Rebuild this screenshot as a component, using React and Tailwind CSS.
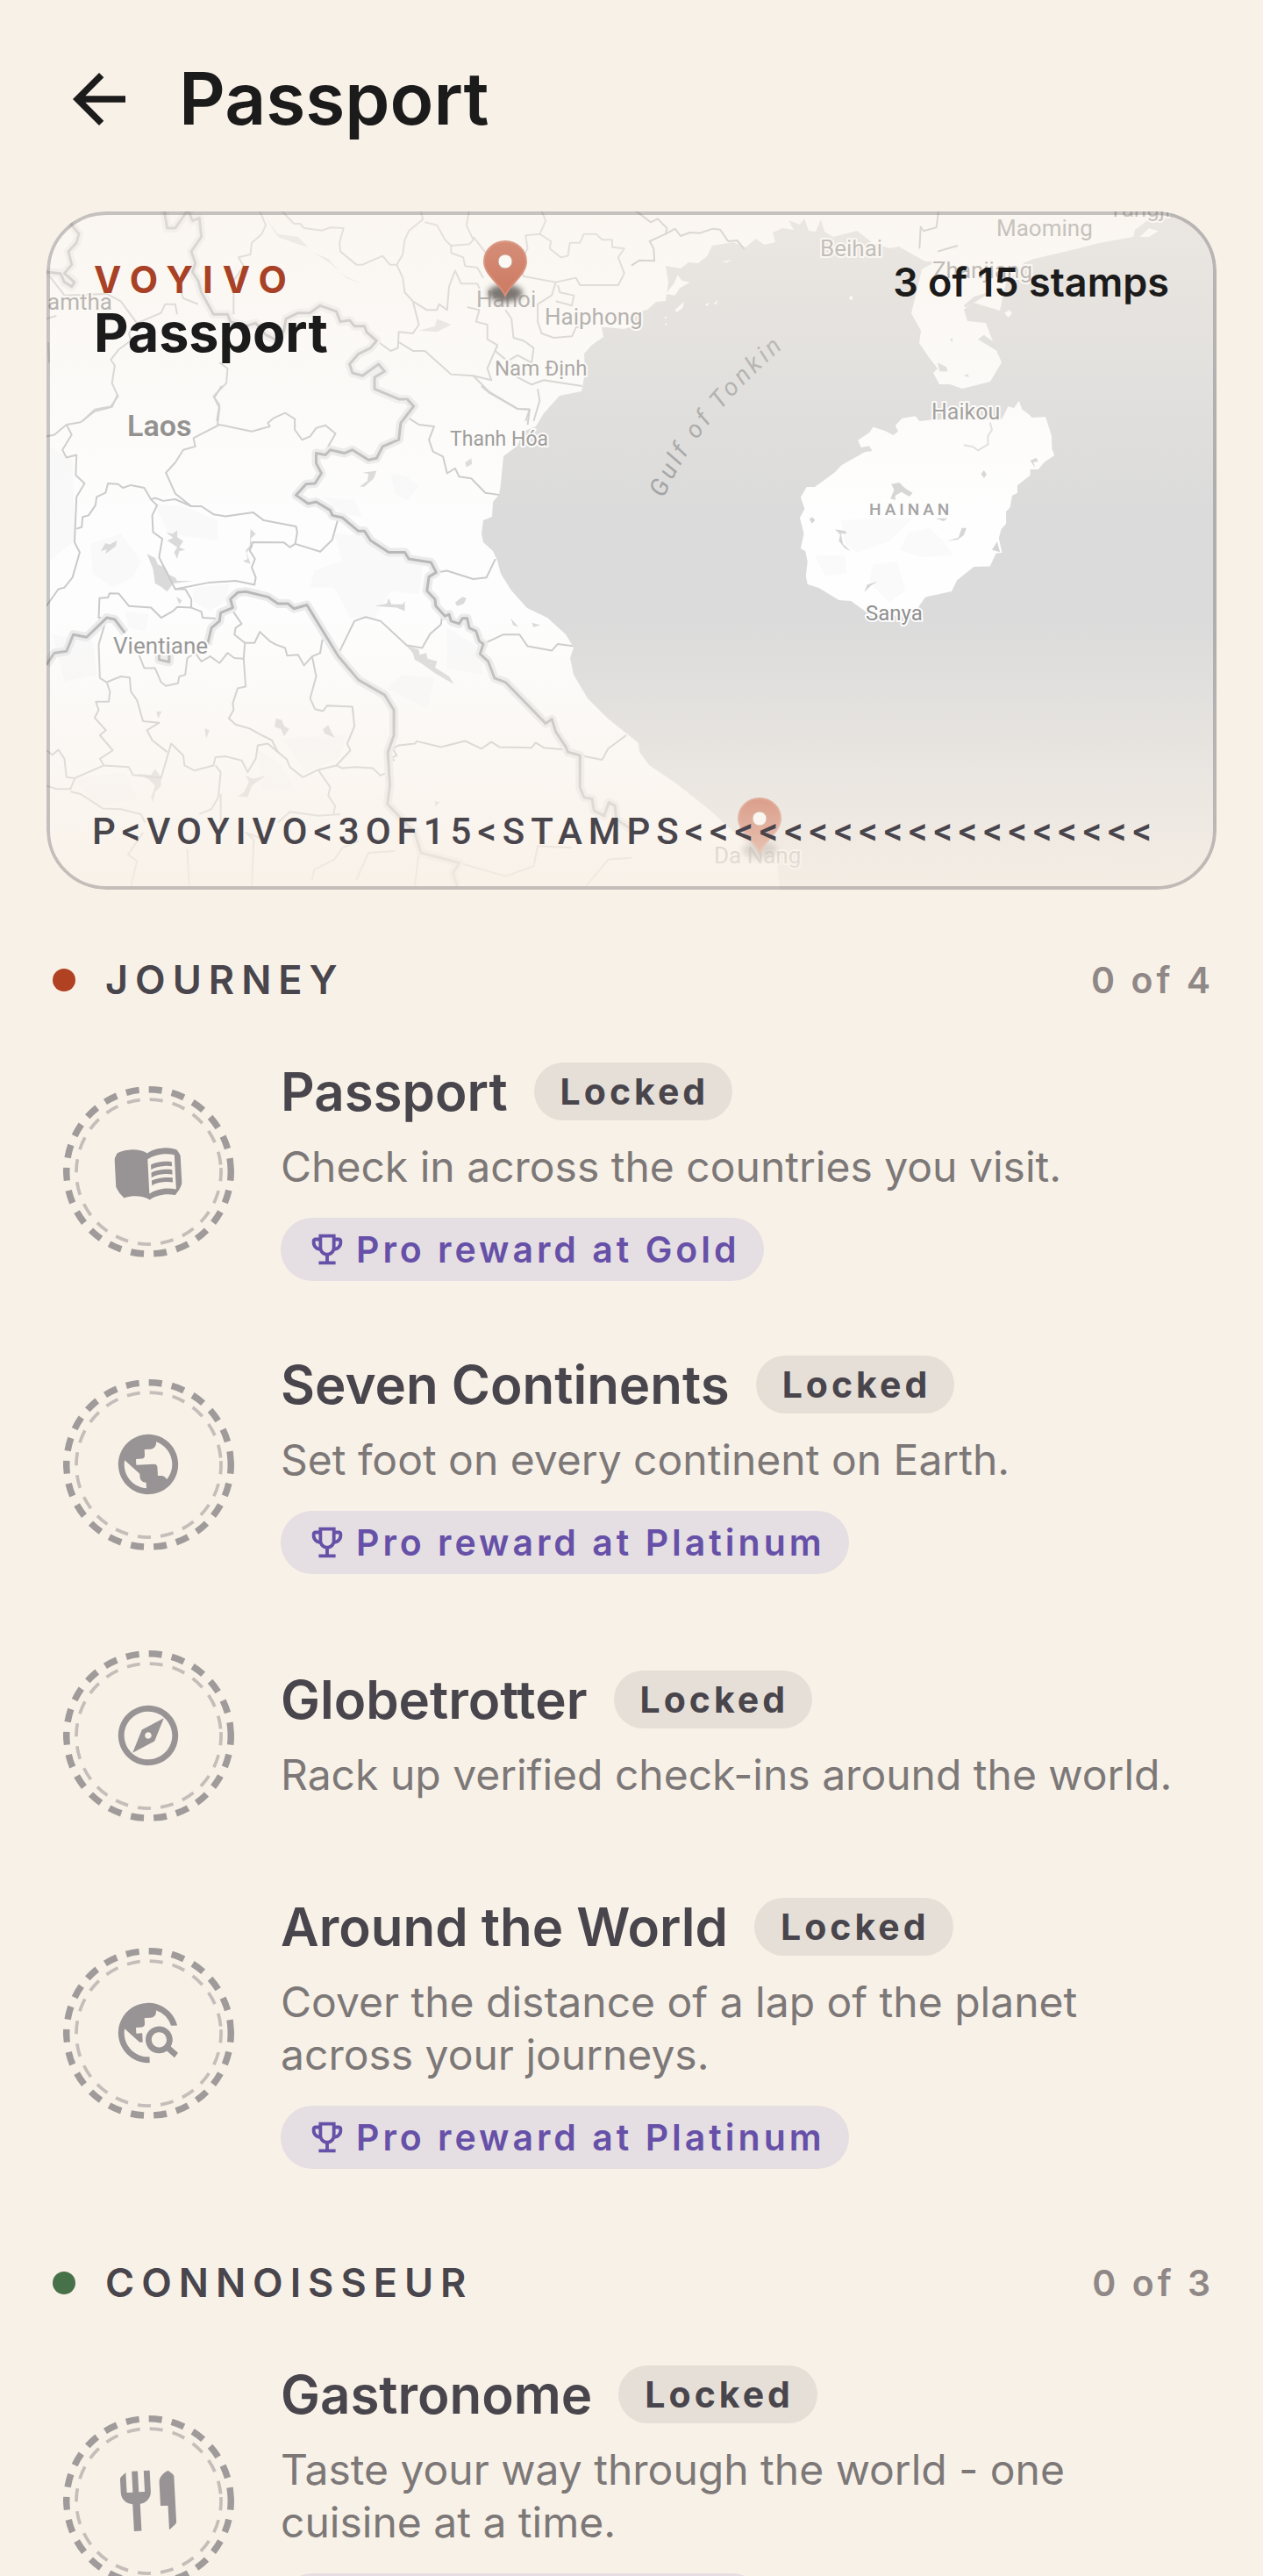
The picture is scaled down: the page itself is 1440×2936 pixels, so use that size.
import React from 'react';
import {
  MdArrowBack,
  MdMenuBook,
  MdPublic,
  MdOutlineExplore,
  MdTravelExplore,
  MdRestaurant,
  MdOutlineEmojiEvents
} from 'react-icons/md';

const sections = [
  {
    name: 'JOURNEY',
    progress: '0 of 4',
    dot: 'bg-[#b04122]',
    stamps: [
      { icon: MdMenuBook, title: 'Passport', text: 'Check in across the countries you visit.', reward: 'Pro reward at Gold' },
      { icon: MdPublic, title: 'Seven Continents', text: 'Set foot on every continent on Earth.', reward: 'Pro reward at Platinum' },
      { icon: MdOutlineExplore, title: 'Globetrotter', text: 'Rack up verified check-ins around the world.' },
      { icon: MdTravelExplore, title: 'Around the World', text: 'Cover the distance of a lap of the planet across your journeys.', reward: 'Pro reward at Platinum' }
    ]
  },
  {
    name: 'CONNOISSEUR',
    progress: '0 of 3',
    dot: 'bg-[#477148]',
    stamps: [
      { icon: MdRestaurant, title: 'Gastronome', text: 'Taste your way through the world - one cuisine at a time.', reward: 'Pro reward at Gold' }
    ]
  }
];

const SEA =
  'M1322 241 L1294 262 L1292 270 L1253 277 L1230 283 L1179 295 L1168 299 L1147 323 L1143 340 L1140 354 L1110 345 L1099 353 L1103 366 L1124 368 L1135 397 L1142 413 L1129 435 L1097 443 L1083 438 L1071 438 L1064 425 L1069 420 L1059 407 L1048 391 L1050 377 L1039 357 L1044 337 L1051 307 L1067 298 L1055 298 L1037 288 L1025 281 L1014 283 L995 277 L977 263 L950 270 L940 264 L936 250 L930 264 L922 263 L917 249 L912 256 L899 251 L905 262 L892 260 L881 265 L884 276 L871 279 L862 272 L850 282 L836 276 L812 280 L806 292 L796 300 L785 299 L776 306 L759 303 L762 322 L759 343 L748 344 L738 353 L725 356 L722 372 L711 375 L692 373 L686 373 L688 384 L675 393 L666 403 L667 425 L663 446 L638 451 L620 471 L611 486 L596 492 L590 508 L574 520 L571 551 L569 564 L562 572 L561 589 L551 593 L549 608 L551 618 L562 628 L567 639 L571 654 L583 673 L601 693 L624 704 L645 723 L654 738 L650 750 L654 769 L670 796 L693 819 L712 834 L728 847 L729 857 L740 872 L771 893 L809 923 L846 957 L856 963 L868 972 L886 980 L889 1014 L1387 1014 L1387 241 Z';

// Country borders, drawn heavier than the provincial ones
const NORTH_BORDERS = [
  'M170 722 L178 770 L196 800 L190 830 L170 860 L178 905 L160 935 L185 965 L178 980 L160 965 L150 935 L115 930',
  'M408 722 L415 780 L435 780 L465 722',
  'M468 722 L478 755 L495 745 L500 810 L475 860 L485 900 L478 930 L492 960 L500 1000 L530 1075 L565 1075 L572 1100 L610 1115 L635 1105 L660 1145 L690 1165 L705 1130 L710 1090 L740 1070 L770 1070 L795 1045 L835 1065 L845 1100 L868 1095 L880 1115 L905 1115 L910 1135 L935 1165 L920 1190 L890 1210 L868 1245 L875 1275 L900 1285 L940 1245 L955 1270 L930 1290 L930 1330 L990 1365 L1010 1365 L1027 1388 L1000 1440'
];
const SOUTH_BORDERS = [
  'M1010 38 L1027 60 L995 110 L990 160 L950 180 L935 215 L915 220 L875 190 L855 200 L820 190 L808 205 L785 200 L785 230 L798 260 L782 290 L760 292 L735 325 L765 350 L785 345 L820 370 L825 385 L850 392 L890 432 L905 432 L920 460 L965 495 L1005 495 L1015 515 L1070 525 L1083 555 L1065 568 L1060 610 L1080 635 L1082 655 L1105 685 L1115 680 L1120 700 L1140 708 L1148 692 L1160 692 L1165 720 L1182 730 L1190 760 L1200 768 L1192 798 L1212 820 L1228 870 L1255 882 L1355 1005 L1370 992 L1380 1030 L1405 1075 L1410 1090 L1440 1100 L1440 1195 L1450 1225 L1470 1230 L1475 1265 L1500 1280 L1512 1240 L1527 1250 L1530 1290 L1568 1320',
  'M115 830 L135 795 L165 790 L182 740 L215 748 L265 690 L285 695 L310 735 M395 800 L395 815 L420 822 L420 800 M515 770 L525 720 L545 700 L548 675 L578 660 L572 635 L590 615 L610 612 L665 628 L690 648 L715 648 L730 663 L762 652 L840 805 L890 875 L955 920 L978 965 L978 1040 L963 1090 L968 1190 L962 1245 L1030 1330 L1045 1390 L1140 1420 L1125 1450 L1135 1490'
];

const NORTH_PROVINCES = [
  'M645 722 L660 770 L650 800 L625 830 L622 870 L592 880 L605 910 L580 960 L580 1075',
  'M700 722 L730 765 L745 765 L755 780 L800 788 L820 778 L853 780 L843 830 L845 860 L885 905 L900 905 L950 875 L968 905 L985 905',
  'M1045 722 L1050 750 L1015 790 L1005 820 L1000 870 L985 905 L1000 950 L1005 1000 L1025 1030 L1060 1060 L1085 1060 L1090 1040 L1110 1060 L1115 980 L1130 925 L1145 970 L1185 970 L1195 1000',
  'M1055 760 L1085 770 L1105 820 L1120 840 L1165 835 L1175 820 L1158 770 L1165 722',
  'M1175 810 L1215 880 M1120 840 L1120 865 L1150 880 L1155 910 L1185 915 L1200 950',
  'M1345 722 L1355 755 L1340 800 L1305 805 L1310 850 L1290 900 L1300 945 L1380 965 L1430 950 L1440 975 L1535 975 L1550 935 L1535 880 L1550 850 L1520 845 L1520 820 L1495 820 L1480 800 L1450 800 L1440 830 L1415 830 L1410 875 L1392 880 L1365 850 L1368 825 L1340 800',
  'M1380 965 L1370 1010 L1335 1040 L1335 1100 L1345 1140 L1375 1155 L1420 1150 L1430 1120 L1465 1110',
  'M1380 1030 L1420 1045 L1425 1010 L1390 1000 L1385 975',
  'M1160 1050 L1190 1060 L1182 1100 L1210 1110 L1210 1160 L1235 1180 L1230 1200 L1260 1235 L1285 1215 L1320 1240 L1325 1190 L1300 1165 L1275 1155 L1270 1090 L1255 1060',
  'M1025 1030 L1040 1110 L1025 1140 L990 1135 L988 1190 L970 1200 L935 1165 M990 1170 L1025 1200 L1055 1200 L1120 1280 L1175 1285 L1215 1340 L1285 1398 L1315 1400 L1305 1440',
  'M1235 1180 L1210 1260 L1220 1300 L1175 1285 M1270 1240 L1278 1285 L1320 1315 L1350 1300 L1445 1320 M1335 1330 L1340 1370 L1325 1440',
  'M265 1005 L300 1030 L340 1105 L400 1070 L410 1040 L435 1040 L440 1075',
  'M340 1105 L320 1140 L325 1165 L295 1195 L275 1230 L285 1250 L278 1310 L293 1355 L275 1390 L235 1400 L205 1440',
  'M545 1240 L565 1260 L562 1310 L530 1355 L545 1385 L538 1440',
  'M115 930 L160 1010 L265 1005 M115 1090 L140 1080 M120 1170 L122 1240 M445 980 L455 1020 L492 1040'
];
const SOUTH_PROVINCES = [
  'M292 25 L278 62 L235 75 L200 108 L165 115 L135 145 L115 150 M165 115 L178 145 L155 190 L165 213 L190 205 L188 265 L210 290 L190 330 L185 465 L198 495 L180 570 L160 600 L145 605 L115 655',
  'M550 0 L532 35 L545 65 L540 115 M480 155 L545 115 L625 135 L670 120 L665 110 L680 95 L708 80 L732 98 L732 130 L750 160 L770 150 L785 125 L808 117 L833 142 L810 190',
  'M480 155 L485 180 L455 190 L435 228 L412 258 L435 320 L475 358 L500 358 L530 382 L560 388 L628 376 L655 400 L735 418 L738 435 L733 470 L795 493 L825 458 L840 392',
  'M190 425 L203 420 L205 390 L220 385 L237 355 L240 330 L262 318 L268 290 L293 292 L305 303 L325 295 L358 303 L375 338 L385 333 L405 342 L435 337 L475 358',
  'M375 338 L390 355 L378 385 L380 435 L403 455 L395 510 L435 605 L520 585 L585 580 L632 592 L635 570 L625 540 L633 515 L620 490 L628 465 L705 466 L720 480 L733 470',
  'M435 605 L460 605 L475 635 L475 660 L440 658 L430 670 L400 690 L375 660 L320 655 L295 618 L272 617 L268 630 L247 632 L245 690 L265 690 M475 660 L500 672 L503 690 L545 693',
  'M265 690 L245 770 L248 870 L265 882 L300 865 L322 868 L325 910 L340 935 L355 998 L395 1003 L365 1025 L378 1055 L415 1090',
  'M345 800 L358 840 L385 840 L400 882 L412 893 L442 885 L445 865 L460 860 L465 810 L485 795 L500 820 L522 805 L545 825 L565 795 L582 810 L605 812 L608 765 L582 740 L585 720 L600 708 L578 670',
  'M608 765 L632 765 L645 732 L670 760 L685 770 L708 780 L713 803 L740 800 L755 832 L775 805 L795 795 L800 757 L815 755',
  'M605 812 L610 895 L590 900 L578 945 L580 965 L568 990 L585 1008 L620 1020 L650 1040 L675 1055 L690 1090 L712 1112 L720 1135 L752 1165 L790 1143 L835 1130 L870 1085 L862 1065 L880 1013 L875 955 L812 952 L802 968 L782 962 L770 930 L785 865 L775 805',
  'M265 882 L273 910 L270 940 L238 940 L245 965 L235 988 L263 1025 L248 1040 L280 1085 L248 1110 L258 1130 L320 1135 L330 1158 L400 1167 L425 1065 L455 1100 L458 1130 L482 1145 L530 1130 L535 1105 L560 1103 L600 1115 L615 1150 L635 1110 L640 1070 L665 1065 L690 1090',
  'M115 1085 L130 1098 L145 1083 L160 1110 L165 1165 L185 1168 L258 1130 M115 1190 L140 1200 L175 1200 L185 1170 M175 1208 L200 1215 L255 1258 L300 1260 L350 1275 L360 1300',
  'M535 1130 L548 1150 L542 1225 L525 1260 L495 1275 M548 1215 L548 1295 M790 1143 L820 1195 L815 1220 L832 1250 L828 1275 M835 1130 L850 1138 L880 1135 L925 1138 L945 1160 L962 1150',
  'M980 1115 L968 1110 L985 1100 L975 1080 L990 1070 L1030 1065 L1035 1058 L1095 1075 L1155 1057 L1195 1080 L1220 1060 L1240 1075 L1320 1077 L1330 1062 L1350 1077 L1405 1083',
  'M840 798 L880 700 L908 688 L945 700 L1010 772 L1048 780 L1068 738 L1095 710 L1098 680 M1083 555 L1110 550 L1175 575 L1208 570 L1230 515 M1200 768 L1250 740 L1290 740 L1310 775 L1370 788 L1385 768 L1425 775',
  'M1010 92 L1040 115 L1078 120 L1065 160 L1075 195 L1100 210 L1110 260 L1130 245 L1140 270 L1170 275 L1205 318 L1245 325 M1195 0 L1215 20 L1285 68 L1315 70 M1315 70 L1310 115',
  'M1440 1100 L1495 1113 L1510 1080 L1555 1040 M325 1490 L340 1415 L318 1395 L355 1330 M470 1490 L465 1380 M625 1490 L630 1350 L610 1330 L655 1350 M775 1470 L780 1440 L830 1410 L850 1375 L890 1355 M885 1470 L915 1390 L980 1385 M690 1300 L720 1268 L790 1280 L845 1275 M1030 1490 L1040 1390 M1140 1420 L1255 1460 L1325 1430 L1335 1370 L1420 1375 M1455 1490 L1510 1410 L1568 1405'
];
const LAKES = [
  'M365 500 L385 512 L392 532 L410 540 L420 562 L435 570 L440 580 L480 580 L430 588 L415 612 L400 598 L385 588 L380 545 Z',
  'M412 435 L428 440 L440 430 L440 450 L455 462 L445 480 L460 488 L445 492 L440 515 L432 495 L440 480 L415 460 L430 452 Z',
  'M250 492 L262 468 L272 472 L290 460 L288 476 L262 500 L265 486 Z',
  'M1008 772 L1040 785 L1042 800 L1058 795 L1062 812 L1085 820 L1080 838 L1115 865 L1127 888 L1080 855 L1045 825 L1030 815 L1025 795 Z',
  'M930 655 L960 648 L965 632 L972 650 L1000 650 L1005 640 L1005 670 L985 660 L960 658 Z',
  'M893 300 L912 282 L915 262 L900 258 L935 252 L928 275 L905 300 Z',
  'M1130 645 L1148 628 L1158 632 L1152 648 L1135 655 Z M1155 228 L1170 215 L1172 232 L1158 242 Z M1268 692 L1288 718 L1274 712 Z M1320 705 L1342 712 L1325 718 Z',
  'M622 425 L635 440 L622 455 L628 478 L612 495 L622 530 L603 522 L615 515 L610 490 L620 475 Z M438 628 L452 638 L445 650 Z',
  'M685 990 L700 995 L705 1012 L718 1022 L705 1043 L698 1022 L682 1015 Z M802 1022 L815 1010 L822 1028 L832 1048 L805 1035 Z M388 970 L402 968 L393 990 Z M508 1020 L520 1025 L512 1050 Z',
  'M340 1155 L375 1158 L385 1140 L400 1165 L400 1190 L385 1210 L380 1240 L375 1225 L385 1190 L370 1172 Z M590 1222 L605 1210 L618 1180 L610 1160 L628 1170 L660 1160 L625 1190 L615 1225 Z M1080 1235 L1092 1240 L1080 1252 Z'
];
const TERRAIN = [
  'M830 440 L900 445 L960 500 L1050 530 L1040 620 L970 610 L930 690 L870 690 L830 600 L770 600 L780 550 L850 520 Z',
  'M970 260 L1010 270 L1040 300 L1010 340 L980 320 Z M800 330 L880 340 L900 390 L850 380 Z',
  'M225 470 L300 440 L350 520 L330 570 L280 600 L230 560 Z M480 600 L570 590 L560 640 L520 670 L480 640 Z',
  'M125 180 L180 220 L185 460 L125 520 Z M130 740 L230 760 L240 860 L160 880 Z',
  'M1110 720 L1190 780 L1200 860 L1110 840 Z M1000 860 L1080 870 L1060 960 L960 900 Z',
  'M380 350 L460 360 L540 400 L540 460 L420 440 Z M310 670 L370 680 L360 730 L320 720 Z',
  'M180 1170 L310 1150 L340 1230 L240 1250 Z M700 1050 L860 1040 L840 1110 L760 1150 Z M640 1080 L700 1130 L730 1200 L650 1200 Z'
];

const HAINAN =
  'M750 775 L850 775 L920 772 L935 730 L950 735 L962 710 L970 740 L985 755 L995 768 L1028 765 L1043 830 L1044 875 L1050 897 L1025 920 L1010 945 L990 945 L990 965 L958 1000 L958 1025 L945 1035 L940 1075 L930 1090 L930 1130 L918 1150 L912 1180 L920 1230 L905 1232 L890 1277 L850 1278 L808 1325 L795 1362 L730 1382 L715 1410 L705 1440 L600 1450 L570 1420 L545 1395 L515 1392 L465 1350 L437 1338 L433 1310 L437 1260 L432 1225 L420 1215 L428 1165 L418 1110 L430 1080 L420 1040 L435 1005 L455 1005 L505 955 L522 930 L580 885 L598 882 L590 865 L570 870 L562 845 L590 820 L600 800 L628 812 L650 828 L662 815 L655 795 L672 770 L705 763 L715 780 Z';

const HAINAN_WATER =
  'M645 995 L665 990 L680 1010 L698 1025 L690 1038 L670 1022 L655 1035 L655 1050 L643 1045 L652 1015 Z M868 960 L875 948 L882 962 L875 975 Z M505 1150 L530 1155 L535 1165 L520 1165 L525 1200 L545 1225 L530 1215 L515 1190 L518 1168 Z M820 1145 L832 1145 L825 1170 L810 1185 L783 1190 L812 1178 Z M895 1220 L908 1192 L915 1228 Z M990 915 L1005 905 L1010 918 L998 920 L1002 940 Z M578 1365 L585 1340 L612 1328 L595 1342 Z M442 1115 L448 1108 L456 1118 L448 1130 Z M755 1112 L785 1112 L775 1122 Z';

const HAINAN_TERRAIN =
  'M520 1120 L620 1110 L700 1110 L640 1190 L560 1230 L530 1200 Z M690 1160 L740 1145 L775 1190 L800 1240 L720 1245 L665 1220 Z M455 1240 L530 1240 L535 1300 L480 1310 Z M600 1270 L660 1260 L680 1360 L640 1400 L590 1330 Z';

const ISLETS =
  'M105 310 L115 280 L125 300 L145 305 L120 325 L108 350 L85 345 Z M108 400 L130 372 L128 392 L112 408 Z M225 235 L250 228 L235 238 Z M540 358 L546 350 L550 360 L545 367 Z M926 410 L938 400 L945 412 L935 425 Z M183 380 L192 375 L188 388 Z M203 380 L215 365 L210 380 Z M80 425 L88 422 L86 430 Z M82 448 L88 445 L86 454 Z M1262 150 L1285 120 L1308 130 L1285 150 Z';

const CITIES = [
  { name: 'amtha', x: 54, y: 353, size: 26 },
  { name: 'Hanoi', x: 543, y: 350, size: 26 },
  { name: 'Haiphong', x: 621, y: 370, size: 26 },
  { name: 'Nam Định', x: 564, y: 428, size: 24 },
  { name: 'Thanh Hóa', x: 513, y: 508, size: 23 },
  { name: 'Vientiane', x: 129, y: 745, size: 26 },
  { name: 'Beihai', x: 935, y: 292, size: 26 },
  { name: 'Maoming', x: 1136, y: 269, size: 26 },
  { name: 'Yangji', x: 1264, y: 247, size: 26 },
  { name: 'Zhanjiang', x: 1063, y: 317, size: 26 },
  { name: 'Haikou', x: 1062, y: 478, size: 25 },
  { name: 'Sanya', x: 987, y: 707, size: 24 },
  { name: 'Da Nang', x: 814, y: 984, size: 26 }
];

function Lines({ paths, stroke, width }) {
  return paths.map((d) => (
    <path key={d} d={d} fill="none" stroke={stroke} strokeWidth={width} strokeLinejoin="round" vectorEffect="non-scaling-stroke" />
  ));
}

function Pin({ x, y, shadow }) {
  return (
    <g transform={`translate(${x} ${y})`}>
      <ellipse cx="0" cy="-3" rx="20" ry="10" fill="#2a2826" opacity={shadow} filter="url(#pin-shadow)" />
      <path d="M0 0 C-6 -14 -24 -24 -24 -39 A24 23 0 0 1 24 -39 C24 -24 6 -14 0 0 Z" fill="#b22c0a" stroke="#bd4a2a" strokeWidth="2" />
      <circle cx="0" cy="-39" r="8" fill="#ffffff" stroke="#9c5a48" strokeWidth="1" />
    </g>
  );
}

function MapBackdrop() {
  return (
    <svg
      className="absolute inset-0 h-full w-full"
      viewBox="53 241 1334 773"
      preserveAspectRatio="xMidYMid slice"
      fontFamily="Roboto, sans-serif"
      aria-hidden="true"
    >
      <defs>
        <linearGradient id="fade" x1="0" y1="0" x2="0" y2="1">
          <stop offset="0" stopColor="#f8f0e6" stopOpacity="0.55" />
          <stop offset="0.45" stopColor="#f8f0e6" stopOpacity="0" />
          <stop offset="0.6" stopColor="#f8f0e6" stopOpacity="0" />
          <stop offset="1" stopColor="#f8f0e6" stopOpacity="0.88" />
        </linearGradient>
        <filter id="pin-shadow" x="-50%" y="-50%" width="200%" height="200%">
          <feGaussianBlur stdDeviation="3" />
        </filter>
        <path id="gulf" d="M757 568 Q792 482 905 386" />
      </defs>

      <rect x="53" y="241" width="1334" height="773" fill="#fdfdfd" />

      {/* Northern half */}
      <g transform="scale(0.4592 0.3333)">
        <Lines paths={NORTH_PROVINCES} stroke="#cfcfcf" width="2" />
        <Lines paths={NORTH_BORDERS} stroke="#efeff0" width="10" />
        <Lines paths={NORTH_BORDERS} stroke="#bebebf" width="3" />
        <path d="M660 745 L690 800 L740 810 L765 845 L730 830 L690 810 Z M780 865 L815 885 L850 940 L905 975 L860 950 L820 900 Z M1040 1130 L1080 1115 L1085 1090 L1120 1110 L1085 1135 Z" fill="#e3e3e3" />
      </g>

      {/* Southern half */}
      <g transform="translate(0 440) scale(0.4592 0.3827)">
        {TERRAIN.map((d) => <path key={d} d={d} fill="#f9f9fa" />)}
        {LAKES.map((d) => <path key={d} d={d} fill="#dadada" />)}
        <Lines paths={SOUTH_PROVINCES} stroke="#cacacb" width="2" />
        <Lines paths={SOUTH_BORDERS} stroke="#ebebec" width="10" />
        <Lines paths={SOUTH_BORDERS} stroke="#b8b8b9" width="3" />
      </g>

      {/* Sea, peninsula and islands */}
      <path d={SEA} fill="#dbdbdb" />
      <g transform="translate(720 220) scale(0.4592 0.3333)">
        <path d={HAINAN} fill="#fefefe" />
        <path d={HAINAN_TERRAIN} fill="#fafafa" />
        <path d={HAINAN_WATER} fill="#d6d6d6" />
        <path d={ISLETS} fill="#fefefe" />
        <path d="M825 385 L850 355 L895 335 L880 350 L850 375 L830 392 Z M860 500 L875 485 L905 515 L908 540 L890 525 Z M760 580 L782 595 L785 610 L765 610 Z M825 625 L835 618 L838 630 Z M790 500 L798 495 L796 510 Z" fill="#dadada" />
        <Lines
          paths={['M0 50 L48 100 L65 88 L88 120 L85 140 L108 122 L122 147 L145 135 L170 137 L202 122 L220 125 L240 165 L262 162 L280 192', 'M85 140 L45 165 L55 190 L57 232 L20 230 L0 248', 'M762 65 L757 118 L725 130 L718 115 L715 190', 'M760 200 L785 190 L810 180']}
          stroke="#bdbdbd"
          width="2"
        />
        <Lines paths={['M890 785 L895 810 L885 830 L885 860 L860 880 L848 868 L825 862']} stroke="#dedede" width="2" />
      </g>

      {/* Labels */}
      <g fill="#909090" stroke="#fdfdfd" strokeWidth="4" strokeLinejoin="round" paintOrder="stroke">
        {CITIES.map((city) => (
          <text key={city.name} x={city.x} y={city.y} fontSize={city.size}>{city.name}</text>
        ))}
        <text x="145" y="497" fontSize="34" fontWeight="600" fill="#808080">Laos</text>
        <text x="991" y="587" fontSize="19" fontWeight="500" letterSpacing="4" fill="#a3a3a3">HAINAN</text>
      </g>
      <text fontSize="28" fontStyle="italic" letterSpacing="4" fill="#a0a0a0">
        <textPath href="#gulf">Gulf of Tonkin</textPath>
      </text>

      <Pin x={576} y={337} shadow={1} />
      <Pin x={866} y={972} shadow={0.5} />
      <rect x="53" y="241" width="1334" height="773" fill="url(#fade)" />
    </svg>
  );
}

function PassportCard() {
  return (
    <section className="relative flex aspect-[1334/773] flex-col justify-between overflow-hidden rounded-[68px]">
      <MapBackdrop />
      <div className="relative flex items-start justify-between px-[54px] pt-[54px]">
        <div>
          <p className="text-[42px] leading-[48px] font-bold tracking-[11px] text-[#a84125]">VOYIVO</p>
          <h2 className="text-[61px] leading-[72px] font-bold text-[#1c1b1b]">Passport</h2>
        </div>
        <p className="text-[45px] leading-[54px] font-semibold text-[#1c1b1b]">3 of 15 stamps</p>
      </div>
      <p className="relative px-[52px] pb-[42px] font-[Roboto] text-[42px] leading-[48px] font-medium tracking-[7px] whitespace-nowrap text-[#49454c]">
        {'P<VOYIVO<3OF15<STAMPS<<<<<<<<<<<<<<<<<<<'}
      </p>
      <div className="absolute inset-0 rounded-[68px] border-4 border-[#49454c]/30" />
    </section>
  );
}

function Badge({ icon: Icon }) {
  return (
    <div className="relative flex size-[200px] shrink-0 items-center justify-center">
      <svg className="absolute size-[195px] -rotate-3" viewBox="0 0 52 52" fill="none" aria-hidden="true">
        <circle cx="26" cy="26" r="25" stroke="#a09b9b" strokeWidth="2" strokeDasharray="4 3" />
        <circle cx="26" cy="26" r="22" stroke="#c5bdb9" strokeWidth="1" strokeDasharray="4 3" />
      </svg>
      <span className="size-[82px] -rotate-3 overflow-hidden rounded-full text-[#989394]">
        <Icon className="size-full" />
      </span>
    </div>
  );
}

function StampRow({ icon, title, text, reward }) {
  return (
    <li className="flex items-center gap-[51px]">
      <Badge icon={icon} />
      <div className="min-w-0 flex-1">
        <div className="flex h-[68px] items-center gap-[30px]">
          <h3 className="text-[60px] leading-[68px] font-semibold text-[#49454c]">{title}</h3>
          <span className="rounded-full bg-[#e6dfd8] pr-[27px] pl-[30px] text-[41px] leading-[66px] font-bold tracking-[4px] text-[#49454c]">Locked</span>
        </div>
        <p className="mt-[22px] text-[48px] leading-[60px] text-[#7d7878]">{text}</p>
        {reward && (
          <p className="mt-[28px] flex w-fit items-center gap-[10px] rounded-full bg-[#e5dee2] pr-[27px] pl-[30px] text-[41px] leading-[72px] font-semibold tracking-[4px] text-[#6650a8]">
            <MdOutlineEmojiEvents className="size-[46px]" />
            {reward}
          </p>
        )}
      </div>
    </li>
  );
}

function Section({ name, progress, dot, stamps }) {
  return (
    <section>
      <header className="flex h-[60px] items-center pr-[56px] pl-[60px]">
        <span className={`size-[26px] rounded-full ${dot}`} />
        <h2 className="ml-[34px] text-[45px] leading-[60px] font-semibold tracking-[8px] text-[#49454c]">{name}</h2>
        <span className="ml-auto text-[41px] leading-[60px] font-semibold tracking-[4px] text-[#8f8887]">{progress}</span>
      </header>
      <ul className="mt-[63px] flex flex-col gap-[84px] px-[69px]">
        {stamps.map((stamp) => (
          <StampRow key={stamp.title} {...stamp} />
        ))}
      </ul>
    </section>
  );
}

export default function App() {
  return (
    <div className="h-screen overflow-hidden bg-[#f8f1e7] font-[Inter,sans-serif]">
      <header className="flex h-[226px] items-center gap-[46px] px-[68px]">
        <button type="button" aria-label="Back" className="text-[#1c1b1b]">
          <MdArrowBack className="size-[90px]" />
        </button>
        <h1 className="text-[82px] leading-[100px] font-semibold text-[#1c1b1b]">Passport</h1>
      </header>
      <main>
        <div className="px-[53px] pt-[15px] pb-[73px]">
          <PassportCard />
        </div>
        <div className="flex flex-col gap-[100px]">
          {sections.map((section) => (
            <Section key={section.name} {...section} />
          ))}
        </div>
      </main>
    </div>
  );
}
